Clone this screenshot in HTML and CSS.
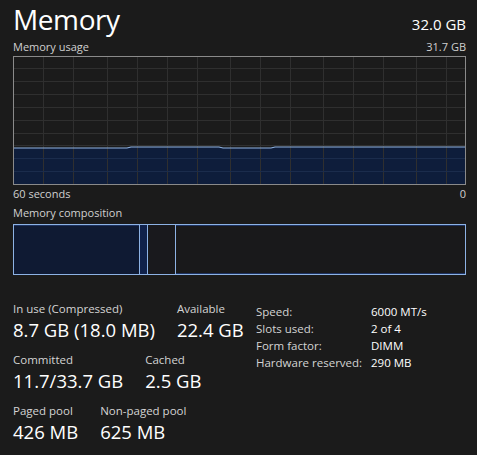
FILE: index.html
```html
<!DOCTYPE html>
<html>
<head>
<meta charset="utf-8">
<link rel="stylesheet" href="styles.css">
</head>
<body>
<div class="page">
  <div class="header">
    <div class="title">Memory</div>
    <div class="total">32.0 GB</div>
  </div>
  <div class="caption-row top">
    <span>Memory usage</span>
    <span>31.7 GB</span>
  </div>
  <svg class="graph" width="453" height="129" viewBox="0 0 453 129" shape-rendering="crispEdges">
    <rect x="0" y="0" width="453" height="129" fill="#1b1b1b"/>
    <path d="M0 92 L114 92 L118 91 L206 91 L210 92 L258 92 L262 91 L452 91 L452 128 L0 128 Z" fill="#0e1d3b" shape-rendering="auto"/>
    <g stroke="#2f2f2f" stroke-width="1">
      <line x1="0" y1="12.5" x2="453" y2="12.5"/>
      <line x1="0" y1="25.5" x2="453" y2="25.5"/>
      <line x1="0" y1="38.5" x2="453" y2="38.5"/>
      <line x1="0" y1="51.5" x2="453" y2="51.5"/>
      <line x1="0" y1="64.5" x2="453" y2="64.5"/>
      <line x1="0" y1="77.5" x2="453" y2="77.5"/>
      <line x1="0" y1="89.5" x2="453" y2="89.5"/>
      <line x1="30.5" y1="0" x2="30.5" y2="129"/>
      <line x1="60.5" y1="0" x2="60.5" y2="129"/>
      <line x1="94.5" y1="0" x2="94.5" y2="129"/>
      <line x1="124.5" y1="0" x2="124.5" y2="129"/>
      <line x1="154.5" y1="0" x2="154.5" y2="129"/>
      <line x1="184.5" y1="0" x2="184.5" y2="129"/>
      <line x1="217.5" y1="0" x2="217.5" y2="129"/>
      <line x1="247.5" y1="0" x2="247.5" y2="129"/>
      <line x1="277.5" y1="0" x2="277.5" y2="129"/>
      <line x1="310.5" y1="0" x2="310.5" y2="129"/>
      <line x1="340.5" y1="0" x2="340.5" y2="129"/>
      <line x1="370.5" y1="0" x2="370.5" y2="129"/>
      <line x1="403.5" y1="0" x2="403.5" y2="129"/>
      <line x1="433.5" y1="0" x2="433.5" y2="129"/>
    </g>
    <g stroke="#1b2c4c" stroke-width="1">
      <line x1="0" y1="102.5" x2="453" y2="102.5"/>
      <line x1="0" y1="115.5" x2="453" y2="115.5"/>
    </g>
    <path d="M0 92 L114 92 L118 91 L206 91 L210 92 L258 92 L262 91 L452 91" fill="none" stroke="#8fb3e3" stroke-width="1.2" shape-rendering="auto"/>
    <rect x="0.5" y="0.5" width="452" height="128" fill="none" stroke="#8a8a8a" stroke-width="1"/>
  </svg>
  <div class="caption-row">
    <span>60 seconds</span>
    <span>0</span>
  </div>
  <div class="caption-row comp-label">
    <span>Memory composition</span>
  </div>
  <div class="comp">
    <div class="seg inuse"></div>
    <div class="seg modified"></div>
    <div class="seg standby"></div>
    <div class="seg free"></div>
  </div>
  <div class="details">
    <div class="stats">
      <div class="stat-row">
        <div class="stat"><div class="label">In use (Compressed)</div><div class="value">8.7 GB (18.0 MB)</div></div>
        <div class="stat"><div class="label">Available</div><div class="value">22.4 GB</div></div>
      </div>
      <div class="stat-row">
        <div class="stat"><div class="label">Committed</div><div class="value">11.7/33.7 GB</div></div>
        <div class="stat"><div class="label">Cached</div><div class="value">2.5 GB</div></div>
      </div>
      <div class="stat-row">
        <div class="stat"><div class="label">Paged pool</div><div class="value">426 MB</div></div>
        <div class="stat"><div class="label">Non-paged pool</div><div class="value">625 MB</div></div>
      </div>
    </div>
    <div class="props">
      <div class="pk">Speed:</div><div class="pv">6000 MT/s</div>
      <div class="pk">Slots used:</div><div class="pv">2 of 4</div>
      <div class="pk">Form factor:</div><div class="pv">DIMM</div>
      <div class="pk">Hardware reserved:</div><div class="pv">290 MB</div>
    </div>
  </div>
</div>
</body>
</html>
```
FILE: styles.css
```css
html, body {
  margin: 0;
  padding: 0;
  background: #1b1b1b;
}
body {
  font-family: "Open Sans", "Noto Sans", sans-serif;
  color: #ffffff;
}
.page {
  width: 453px;
  padding: 0 12px 0 13px;
}
.header {
  display: flex;
  justify-content: space-between;
  align-items: baseline;
  height: 38px;
}
.title {
  font-size: 28px;
  line-height: 38px;
  letter-spacing: -0.4px;
}
.total {
  font-size: 15px;
  line-height: 20px;
}
.caption-row {
  display: flex;
  justify-content: space-between;
  font-size: 11px;
  line-height: 17px;
  color: #d0d0d0;
}
.caption-row.top {
  height: 18px;
}
.caption-row.comp-label {
  margin-top: 2px;
  height: 20px;
}
.graph {
  display: block;
}
.comp {
  display: flex;
  height: 51px;
  box-sizing: border-box;
  border: 1px solid #8db2e4;
  background: #1a1a1c;
}
.seg {
  height: 100%;
  box-sizing: border-box;
  border-right: 1px solid #8db2e4;
}
.seg.inuse {
  width: 126px;
  background: #0f1a33;
  box-shadow: inset 0 1px 0 #1d3260;
}
.seg.modified {
  width: 8px;
  background: #10214a;
}
.seg.standby {
  width: 28px;
  background: #19191d;
}
.seg.free {
  flex: 1;
  border-right: none;
  background: #19191b;
  box-shadow: inset 0 1px 0 #1d3260, inset 0 -1px 0 #1d3260;
}
.details {
  display: flex;
  margin-top: 26px;
}
.stats {
  width: 243px;
  display: flex;
  flex-direction: column;
  gap: 9px;
}
.stat-row {
  display: flex;
  gap: 22px;
}
.label {
  font-size: 11.5px;
  line-height: 16px;
  color: #d4d4d4;
}
.value {
  font-size: 18.5px;
  line-height: 26px;
  color: #ffffff;
}
.props {
  display: grid;
  grid-template-columns: 115px auto;
  grid-auto-rows: 17px;
  font-size: 11.5px;
  line-height: 17px;
  align-content: start;
  margin-top: 2px;
}
.pk {
  color: #d4d4d4;
}
.pv {
  color: #ffffff;
}
```
